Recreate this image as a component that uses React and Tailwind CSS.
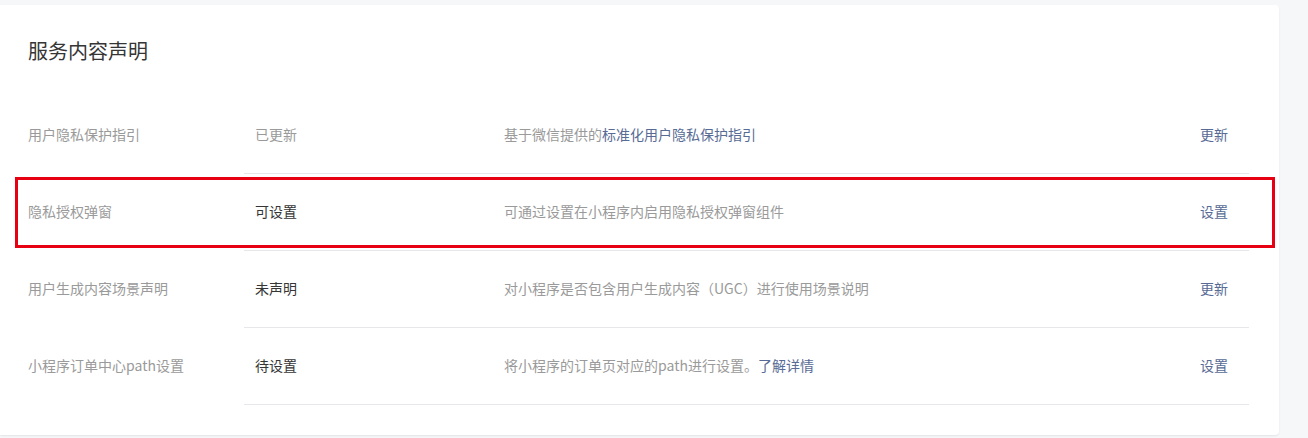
import React from 'react';

const rows = [
  {
    label: '用户隐私保护指引',
    status: '已更新',
    muted: true,
    desc: (
      <>
        基于微信提供的<span className="text-[#576b95]">标准化用户隐私保护指引</span>
      </>
    ),
    action: '更新',
  },
  {
    label: '隐私授权弹窗',
    status: '可设置',
    desc: '可通过设置在小程序内启用隐私授权弹窗组件',
    action: '设置',
    highlight: true,
  },
  {
    label: '用户生成内容场景声明',
    status: '未声明',
    desc: '对小程序是否包含用户生成内容（UGC）进行使用场景说明',
    action: '更新',
  },
  {
    label: '小程序订单中心path设置',
    status: '待设置',
    desc: (
      <>
        将小程序的订单页对应的path进行设置。<span className="text-[#576b95]">了解详情</span>
      </>
    ),
    action: '设置',
  },
];

export default function App() {
  return (
    <div
      className="w-[1308px] h-[438px] bg-[#f6f7f9] pt-[5px]"
      style={{ fontFamily: '"Microsoft YaHei", "Noto Sans CJK SC", "Noto Sans", sans-serif' }}
    >
      <div className="w-[1279px] h-[430px] bg-white rounded-r-[4px] shadow-[0_1px_2px_rgba(0,0,0,0.08)] pl-[28px] pr-[30px] pt-[34px]">
        <h2 className="text-[20px] leading-[24px] text-[#353535] font-normal">服务内容声明</h2>

        <div className="mt-[34px]">
          {rows.map((row, i) => (
            <div key={i} className="relative flex items-stretch h-[77px]">
              {row.highlight && (
                <div className="absolute left-[-13px] right-[-26px] top-[3px] bottom-[3px] border-[3px] border-[#e60012] pointer-events-none" />
              )}
              <div className="w-[216px] flex items-center pb-[2px] text-[14px] text-[#9a9a9a]">{row.label}</div>
              <div className="flex-1 flex items-center pb-[2px] border-b border-[#e7e7eb] pl-[11px] text-[14px]">
                <div className={`w-[249px] ${row.muted ? 'text-[#9a9a9a]' : 'text-[#353535]'}`}>{row.status}</div>
                <div className="flex-1 text-[#9a9a9a]">{row.desc}</div>
                <div className="w-[49px] text-[#576b95]">{row.action}</div>
              </div>
            </div>
          ))}
        </div>
      </div>
    </div>
  );
}
